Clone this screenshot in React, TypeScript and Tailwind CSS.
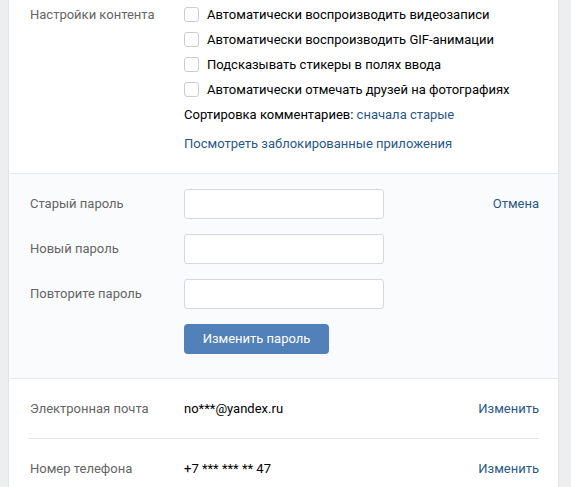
const checkboxes = [
  "Автоматически воспроизводить видеозаписи",
  "Автоматически воспроизводить GIF-анимации",
  "Подсказывать стикеры в полях ввода",
  "Автоматически отмечать друзей на фотографиях",
];

const passwordFields = ["Старый пароль", "Новый пароль", "Повторите пароль"];

function Checkbox({ label }: { label: string }) {
  return (
    <label className="flex h-[25px] items-center">
      <span className="mr-[8px] h-[15px] w-[15px] rounded-[3px] border border-[#c8cdd3] bg-white" />
      <span className="text-black">{label}</span>
    </label>
  );
}

export default function App() {
  return (
    <div
      className="flex h-[487px] w-[571px] overflow-hidden bg-[#edeef0] text-[13px]"
      style={{ fontFamily: "Roboto, 'Open Sans', Arial, sans-serif" }}
    >
      <div className="ml-[8px] flex w-[551px] shrink-0 flex-col border-x border-[#e3e4e8] bg-white">
        {/* content settings */}
        <div className="flex pb-[17px] pl-[21px] pr-[19px] pt-[2px]">
          <div className="flex h-[25px] w-[154px] shrink-0 items-center text-[#656565]">
            Настройки контента
          </div>
          <div className="flex flex-col">
            {checkboxes.map((c) => (
              <Checkbox key={c} label={c} />
            ))}
            <div className="flex h-[25px] items-center text-black">
              Сортировка комментариев:&nbsp;
              <a className="text-[#2a5885]">сначала старые</a>
            </div>
            <div className="mt-[4px] flex h-[25px] items-center">
              <a className="text-[#2a5885]">Посмотреть заблокированные приложения</a>
            </div>
          </div>
        </div>

        {/* password */}
        <div className="flex flex-col gap-[15px] border-y border-[#e7e8ec] bg-[#fafbfc] pb-[24px] pl-[21px] pr-[19px] pt-[15px]">
          {passwordFields.map((f, i) => (
            <div key={f} className="flex h-[30px] items-center">
              <div className="w-[154px] shrink-0 text-[#656565]">{f}</div>
              <input
                type="password"
                className="h-[30px] w-[200px] rounded-[3px] border border-[#d3d9de] bg-white px-[8px] outline-none"
              />
              {i === 0 && <a className="ml-auto text-[#2a5885]">Отмена</a>}
            </div>
          ))}
          <div className="flex h-[30px] items-center pl-[154px]">
            <button className="h-[30px] w-[145px] rounded-[4px] bg-[#5181b8] text-[13px] text-white">
              Изменить пароль
            </button>
          </div>
        </div>

        {/* contacts */}
        <div className="flex flex-col px-[19px]">
          <div className="flex h-[60px] items-center border-b border-[#e7e8ec] pl-[2px] pt-[1px]">
            <div className="w-[154px] shrink-0 text-[#656565]">Электронная почта</div>
            <div className="text-black">no***@yandex.ru</div>
            <a className="ml-auto text-[#2a5885]">Изменить</a>
          </div>
          <div className="flex h-[60px] items-center pl-[2px]">
            <div className="w-[154px] shrink-0 text-[#656565]">Номер телефона</div>
            <div className="text-black">+7 *** *** ** 47</div>
            <a className="ml-auto text-[#2a5885]">Изменить</a>
          </div>
        </div>
      </div>
    </div>
  );
}
